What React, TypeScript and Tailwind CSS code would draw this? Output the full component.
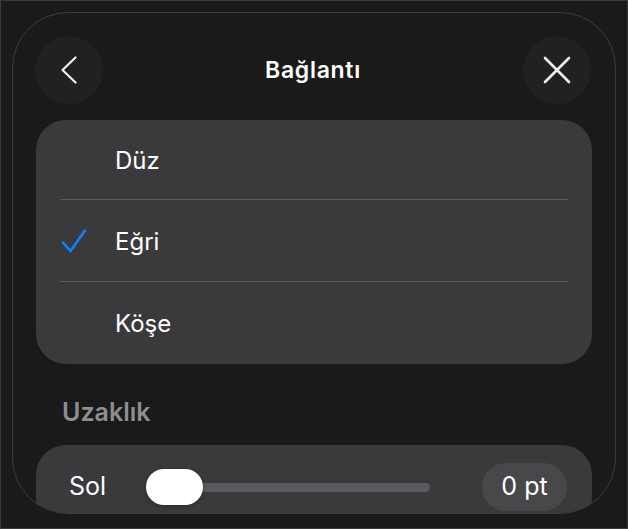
import React from "react";

// Connector style sheet: line type list + distance slider
const options = [
  { label: "Düz", checked: false, h: "h-[80px]" },
  { label: "Eğri", checked: true, h: "h-[82px]" },
  { label: "Köşe", checked: false, h: "h-[82px]" },
];

function CheckIcon() {
  return (
    <svg width="28" height="28" viewBox="0 0 28 28" fill="none">
      <path
        d="M3 15.5 L10.5 24 L25 3.5"
        stroke="#0a84ff"
        strokeWidth="2.6"
        strokeLinecap="round"
        strokeLinejoin="round"
      />
    </svg>
  );
}

export default function App() {
  return (
    <div
      className="w-[628px] h-[529px] bg-[#1a1a1a] border border-[#3a3a3a] overflow-hidden text-white"
      style={{ fontFamily: "Inter, 'Noto Sans', sans-serif" }}
    >
      <div className="ml-[11px] mt-[11px] w-[604px] h-[502px] rounded-[56px] border border-[#3c3c3e] bg-[#1a1a1a] overflow-hidden">
        {/* Başlık: geri, başlık, kapat */}
        <div className="flex items-center justify-between pl-[22px] pr-[24px] pt-[23px]">
          <button className="w-[68px] h-[68px] rounded-full bg-[#212121] flex items-center justify-center">
            <svg width="28" height="28" viewBox="0 0 28 28" fill="none">
              <path
                d="M20.5 1.5 L7.5 14 L20.5 26.5"
                stroke="#f2f2f2"
                strokeWidth="2.2"
                strokeLinecap="round"
                strokeLinejoin="round"
              />
            </svg>
          </button>
          <h1 className="text-[23px] font-semibold tracking-[0.7px]">Bağlantı</h1>
          <button className="w-[68px] h-[68px] rounded-full bg-[#212121] flex items-center justify-center">
            <svg width="28" height="28" viewBox="0 0 28 28" fill="none">
              <path
                d="M2 2 L26 26 M26 2 L2 26"
                stroke="#f2f2f2"
                strokeWidth="2.6"
                strokeLinecap="round"
              />
            </svg>
          </button>
        </div>

        {/* Çizgi tipi listesi */}
        <div className="mx-[23px] mt-[16px] rounded-[30px] bg-[#3a3a3c] px-[24px]">
          {options.map((o, i) => (
            <div
              key={o.label}
              className={
                "flex items-center " +
                o.h +
                (i < options.length - 1 ? " border-b border-[#5a5a5e]" : "")
              }
            >
              <div className="w-[55px] flex items-center">
                {o.checked && <CheckIcon />}
              </div>
              <span className="text-[24px] leading-none pt-[2px]">{o.label}</span>
            </div>
          ))}
        </div>

        {/* Uzaklık */}
        <div className="pl-[49px] mt-[35px] h-[28px] flex items-center text-[25px] font-semibold text-[#8e8e93]">
          Uzaklık
        </div>

        <div className="mx-[23px] mt-[18px] h-[84px] rounded-[30px] bg-[#3a3a3c] flex items-center pl-[33px] pr-[25px]">
          <span className="w-[77px] text-[25px]">Sol</span>
          <div className="relative w-[284px] h-[36px] flex items-center">
            <div className="w-full h-[9px] rounded-full bg-[#5a5a5e]" />
            <div className="absolute left-0 top-0 w-[57px] h-[36px] rounded-full bg-white shadow-[0_1px_4px_rgba(0,0,0,0.3)]" />
          </div>
          <div className="flex-1" />
          <div className="w-[85px] h-[48px] rounded-full bg-[#48484a] flex items-center justify-center text-[25px]">
            0 pt
          </div>
        </div>
      </div>
    </div>
  );
}
